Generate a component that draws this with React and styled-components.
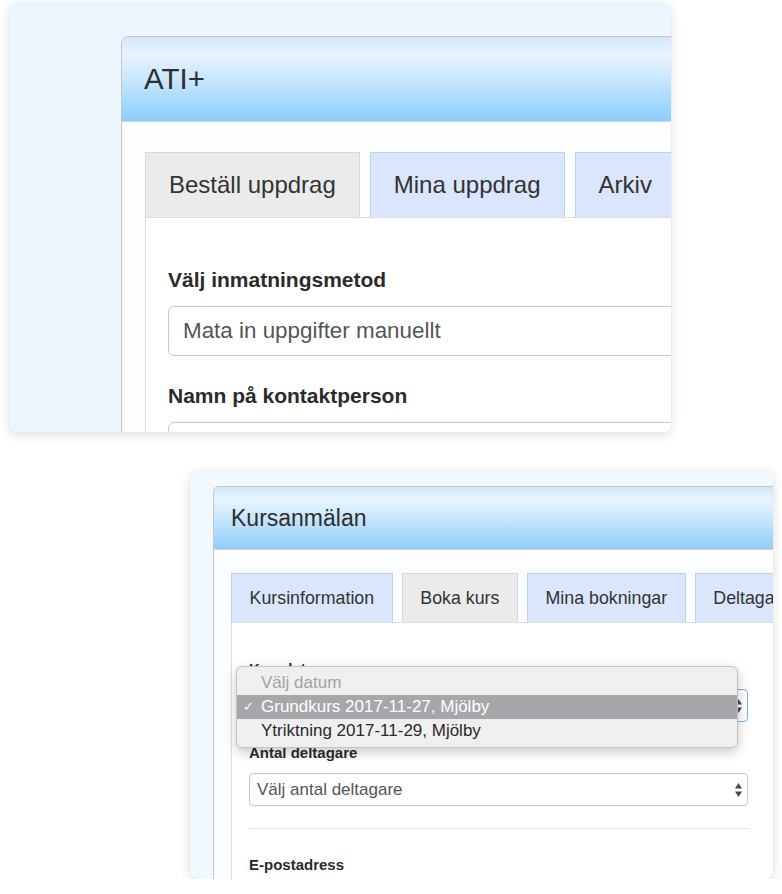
import React from "react";
import styled, { createGlobalStyle, ThemeProvider } from "styled-components";

// two screenshots of the same kind of panel, at two zoom levels
const large = {
    cardTop: 3, cardLeft: 9, cardW: 662, cardH: 429, cardBg: "#edf6fe",
    padT: 33, padL: 112, panelW: 640, radius: 8,
    headH: 84, headPad: 22, headFs: 29.5,
    bodyPadT: 30, bodyPad: 23,
    tabH: 65, tabFs: 24, tabPad: 23, tabGap: 10,
    boxPadT: 49, boxPad: 22, formW: 700,
    labelFs: 21, labelLh: 26, labelGap: 13, fieldGap: 27,
    ctrlH: 50, ctrlFs: 22.4, ctrlPad: 14, ctrlRadius: 6,
};

const small = {
    cardTop: 38, cardLeft: 190, cardW: 583, cardH: 409, cardBg: "#f1f8fe",
    padT: 16, padL: 23, panelW: 572, radius: 6,
    headH: 62, headPad: 17, headFs: 23,
    bodyPadT: 23, bodyPad: 17,
    tabH: 49, tabFs: 17.8, tabPad: 17.6, tabGap: 9,
    boxPadT: 37, boxPad: 17, formW: 499,
    labelFs: 15, labelLh: 18, labelGap: 11, fieldGap: 22,
    ctrlH: 33, ctrlFs: 17, ctrlPad: 7, ctrlRadius: 4,
};

const GlobalStyle = createGlobalStyle`
    * {
        box-sizing: border-box;
    }
    html, body {
        margin: 0;
        padding: 0;
        background: #fff;
    }
    body {
        font-family: "Liberation Sans", Arial, "DejaVu Sans", sans-serif;
        color: #333;
    }
`;

export default function App() {
    return (
        <>
            <GlobalStyle />
            <Page>
                <ThemeProvider theme={large}>
                    <Card>
                        <Panel>
                            <PanelHeader>ATI+</PanelHeader>
                            <PanelBody>
                                <TabRow>
                                    <Tab $variant="grey">Beställ uppdrag</Tab>
                                    <Tab $variant="blue">Mina uppdrag</Tab>
                                    <Tab $variant="blue">Arkiv</Tab>
                                </TabRow>
                                <TabBox>
                                    <Form>
                                        <Field>
                                            <Label>Välj inmatningsmetod</Label>
                                            <Control>Mata in uppgifter manuellt</Control>
                                        </Field>
                                        <Field>
                                            <Label>Namn på kontaktperson</Label>
                                            <Control />
                                        </Field>
                                    </Form>
                                </TabBox>
                            </PanelBody>
                        </Panel>
                    </Card>
                </ThemeProvider>

                <ThemeProvider theme={small}>
                    <Card>
                        <Panel>
                            <PanelHeader>Kursanmälan</PanelHeader>
                            <PanelBody>
                                <TabRow>
                                    <Tab $variant="blue">Kursinformation</Tab>
                                    <Tab $variant="grey">Boka kurs</Tab>
                                    <Tab $variant="blue">Mina bokningar</Tab>
                                    <Tab $variant="blue">Deltagare</Tab>
                                </TabRow>
                                <TabBox>
                                    <Form>
                                        <Field>
                                            <Label>Kursdatum</Label>
                                            <SelectWrap>
                                                <Control $focus>
                                                    Grundkurs 2017-11-27, Mjölby
                                                    <Arrows />
                                                </Control>
                                                <Menu>
                                                    <MenuItem $muted>Välj datum</MenuItem>
                                                    <MenuItem $selected>
                                                        <Check>✓</Check>Grundkurs 2017-11-27, Mjölby
                                                    </MenuItem>
                                                    <MenuItem>Ytriktning 2017-11-29, Mjölby</MenuItem>
                                                </Menu>
                                            </SelectWrap>
                                        </Field>
                                        <Field>
                                            <Label>Antal deltagare</Label>
                                            <Control>
                                                Välj antal deltagare
                                                <Arrows />
                                            </Control>
                                        </Field>
                                        <Divider />
                                        <Field>
                                            <Label>E-postadress</Label>
                                            <Control />
                                        </Field>
                                    </Form>
                                </TabBox>
                            </PanelBody>
                        </Panel>
                    </Card>
                </ThemeProvider>
            </Page>
        </>
    );
}

function Arrows() {
    return (
        <ArrowIcon width="7" height="14" viewBox="0 0 7 14">
            <path d="M0 5.5 L3.5 0 L7 5.5 Z" fill="#4a4a4a" />
            <path d="M0 8.5 L3.5 14 L7 8.5 Z" fill="#4a4a4a" />
        </ArrowIcon>
    );
}

const Page = styled.div`
    display: flex;
    flex-direction: column;
    align-items: flex-start;
`;
const Card = styled.section`
    display: flex;
    flex-direction: column;
    align-items: flex-start;
    width: ${(p) => p.theme.cardW}px;
    height: ${(p) => p.theme.cardH}px;
    margin: ${(p) => p.theme.cardTop}px 0 0 ${(p) => p.theme.cardLeft}px;
    padding: ${(p) => p.theme.padT}px 0 0 ${(p) => p.theme.padL}px;
    background: ${(p) => p.theme.cardBg};
    border-radius: 8px;
    box-shadow: 0 3px 12px rgba(0, 0, 0, 0.13), 0 0 2px rgba(0, 0, 0, 0.05);
    overflow: hidden;
`;
const Panel = styled.div`
    flex: 1 0 auto;
    display: flex;
    flex-direction: column;
    width: ${(p) => p.theme.panelW}px;
    background: #fbfdff;
    border: 1px solid #c6c6c6;
    border-bottom: none;
    border-radius: ${(p) => p.theme.radius}px ${(p) => p.theme.radius}px 0 0;
    overflow: hidden;
`;
const PanelHeader = styled.h1`
    display: flex;
    align-items: center;
    margin: 0;
    height: ${(p) => p.theme.headH + 1}px;
    padding-left: ${(p) => p.theme.headPad}px;
    font-size: ${(p) => p.theme.headFs}px;
    font-weight: normal;
    color: #2e2e2e;
    background: linear-gradient(
        to bottom,
        #cfe8fc 0%,
        #e8f4fe 20%,
        #c9e7fd 50%,
        #a9dafc 75%,
        #8fcdf9 100%
    );
    border-bottom: 1px solid #d3d3d3;
`;
const PanelBody = styled.div`
    flex: 1 0 auto;
    display: flex;
    flex-direction: column;
    padding: ${(p) => p.theme.bodyPadT}px 0 0 ${(p) => p.theme.bodyPad}px;
`;
const TabRow = styled.ul`
    display: flex;
    gap: ${(p) => p.theme.tabGap}px;
    margin: 0;
    padding: 0;
    list-style: none;
`;
const Tab = styled.li`
    flex-shrink: 0;
    display: flex;
    align-items: center;
    height: ${(p) => p.theme.tabH}px;
    padding: 0 ${(p) => p.theme.tabPad}px;
    font-size: ${(p) => p.theme.tabFs}px;
    white-space: nowrap;
    color: #333;
    background: ${(p) => (p.$variant === "grey" ? "#ebebeb" : "#d9e6fb")};
    border: 1px solid ${(p) => (p.$variant === "grey" ? "#d8d8d8" : "#b9d1f4")};
    border-bottom: none;
`;
const TabBox = styled.div`
    flex: 1 0 auto;
    background: #fff;
    border-top: 1px solid #dedede;
    border-left: 1px solid #dedede;
    padding: ${(p) => p.theme.boxPadT}px ${(p) => p.theme.boxPad}px 0;
`;
const Form = styled.div`
    width: ${(p) => p.theme.formW}px;
`;
const Field = styled.div`
    margin-bottom: ${(p) => p.theme.fieldGap}px;
`;
const Label = styled.label`
    display: block;
    font-size: ${(p) => p.theme.labelFs}px;
    line-height: ${(p) => p.theme.labelLh}px;
    font-weight: bold;
    color: #2b2b2b;
    margin-bottom: ${(p) => p.theme.labelGap}px;
`;
const SelectWrap = styled.div`
    position: relative;
`;
const Control = styled.div`
    display: flex;
    align-items: center;
    justify-content: space-between;
    height: ${(p) => p.theme.ctrlH}px;
    padding: 0 5px 0 ${(p) => p.theme.ctrlPad}px;
    font-size: ${(p) => p.theme.ctrlFs}px;
    color: #555;
    background: #fff;
    border: 1px solid ${(p) => (p.$focus ? "#72b2f1" : "#c9c9c9")};
    border-radius: ${(p) => p.theme.ctrlRadius}px;
    white-space: nowrap;
`;
const ArrowIcon = styled.svg`
    flex-shrink: 0;
`;
const Menu = styled.ul`
    position: absolute;
    top: -23px;
    left: -13px;
    width: 502px;
    margin: 0;
    padding: 4px 0;
    list-style: none;
    background: #efefef;
    border: 1px solid #c3c3c3;
    border-radius: 6px;
    box-shadow: 0 4px 12px rgba(0, 0, 0, 0.22);
`;
const MenuItem = styled.li`
    position: relative;
    height: 24px;
    line-height: 24px;
    padding-left: 24px;
    font-size: 17px;
    color: ${(p) => (p.$muted ? "#a3a3a3" : p.$selected ? "#fff" : "#2a2a2a")};
    background: ${(p) => (p.$selected ? "#a7a6ab" : "transparent")};
`;
const Check = styled.span`
    position: absolute;
    left: 6px;
    font-size: 13px;
    font-family: "DejaVu Sans", sans-serif;
`;
const Divider = styled.hr`
    border: none;
    border-top: 1px solid #e6e6e6;
    margin: 2px 0 27px;
`;
